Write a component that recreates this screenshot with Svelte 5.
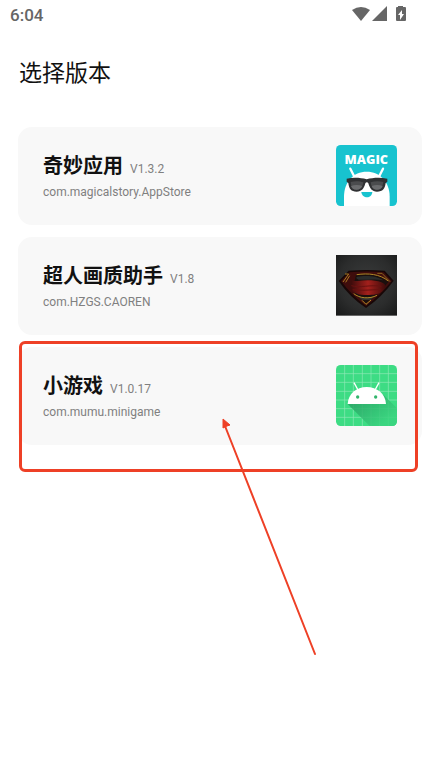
<script>
	const apps = [
		{ name: '奇妙应用', version: 'V1.3.2', pkg: 'com.magicalstory.AppStore', icon: 'magic' },
		{ name: '超人画质助手', version: 'V1.8', pkg: 'com.HZGS.CAOREN', icon: 'hero' },
		{ name: '小游戏', version: 'V1.0.17', pkg: 'com.mumu.minigame', icon: 'android', marked: true }
	];

	const gridLines = [26, 52, 79, 105, 131, 157];
</script>

{#snippet magicIcon()}
	<svg class="icon" viewBox="0 0 183 183" aria-hidden="true">
		<rect width="183" height="183" rx="14" fill="#18c3cf" />
		<text class="magic-text" x="91" y="56" text-anchor="middle">MAGIC</text>
		<path d="M24 183v-28C24 111 52 80 92 80s69 31 69 75v28z" fill="#fff" />
		<path d="M43 71l11 22M141 71l-11 22" stroke="#fff" stroke-width="7" stroke-linecap="round" />
		<path d="M76 141h33c-1 10-8 16-16 16s-16-6-17-16z" fill="#18c3cf" />
		<path d="M32 101c20-4 42-3 60 2 18-5 41-6 62-2v9l-5 4c-2 17-9 26-26 26-15 0-21-9-26-25-2-4-7-4-9 0-4 16-11 25-26 25-17 0-23-9-25-26l-5-4z" fill="#303133" />
		<path d="M44 111c13-4 28-3 38 1-2 15-9 22-20 22-12 0-17-8-18-23zM104 112c11-4 25-5 38-1-2 15-6 23-19 23-11 0-17-7-19-22z" fill="#4b4c4e" />
		<path d="M45 123c12-4 24-3 34 0-4 8-9 11-17 11-10 0-15-4-17-11zM107 123c12-4 23-3 33 0-3 8-8 11-17 11-8 0-13-3-16-11z" fill="#6b6c6e" />
	</svg>
{/snippet}

{#snippet heroIcon()}
	<svg class="icon" viewBox="0 0 183 183" aria-hidden="true">
		<defs>
			<radialGradient id="hero-bg" cx="50%" cy="45%" r="75%">
				<stop offset="0" stop-color="#3a3c3c" />
				<stop offset="0.6" stop-color="#2b2c2c" />
				<stop offset="1" stop-color="#171818" />
			</radialGradient>
			<linearGradient id="hero-red" x1="0" y1="0" x2="1" y2="0">
				<stop offset="0" stop-color="#3c0b0b" />
				<stop offset="0.5" stop-color="#a3201c" />
				<stop offset="1" stop-color="#3f0b0a" />
			</linearGradient>
		</defs>
		<rect width="183" height="183" fill="url(#hero-bg)" />
		<path d="M38 47q53-4 108 0l27 30q-36 50-83 82Q41 127 8 78z" fill="#170707" />
		<path d="M41 52q50-5 102 0l24 26q-34 43-77 75Q46 120 15 78z" fill="#3f0d0c" />
		<path d="M60 60c26-6 62-4 88 14 4 4 8 3 10 6q-31 38-68 65-22-17-41-38z" fill="#1b0f0d" />
		<path d="M48 68c-3 8 4 11 16 10 24-3 54-3 72 4 14 5 15 12 8 21-9 13-24 17-45 17-26 1-45-4-55-16l2-14q2-14 2-22z" fill="url(#hero-red)" />
		<path d="M46 92c26 8 56-4 90 2M50 104c26 4 50 0 84 0" fill="none" stroke="#691110" stroke-width="3" />
		<path d="M62 66c24-6 62-4 80 10-26-5-52 0-74-2-6-2-8-5-6-8z" fill="#2a2c2b" />
		<path d="M64 122c14 7 38 7 52 1l-12 12H78z" fill="#302f2b" />
		<path d="M21 81l17-24M38 57l-11 0M29 82l12-20" fill="none" stroke="#a77a22" stroke-width="3" />
		<path d="M62 59c34-5 70-2 95 19M53 116c18 14 47 17 70 5M78 136l12 12 15-13" fill="none" stroke="#b08a27" stroke-width="3" />
		<path d="M124 55l14 0 24 25" fill="none" stroke="#8b651f" stroke-width="3" />
		<path d="M0 182h183" stroke="#777" stroke-width="3" />
	</svg>
{/snippet}

{#snippet androidIcon()}
	<svg class="icon" viewBox="0 0 183 183" aria-hidden="true">
		<defs>
			<clipPath id="tile"><rect width="183" height="183" rx="14" /></clipPath>
			<linearGradient id="shade" gradientUnits="userSpaceOnUse" x1="60" y1="110" x2="125" y2="190">
				<stop offset="0" stop-color="#2ba566" />
				<stop offset="1" stop-color="#3ad47f" />
			</linearGradient>
		</defs>
		<g clip-path="url(#tile)">
			<rect width="183" height="183" fill="#3ddc84" />
			{#each gridLines as n}
				<path d="M{n} 0v183M0 {n}h183" stroke="#8feab8" stroke-width="2" />
			{/each}
			<path d="M35 117l66 66h82v-53l-43-43 10 30z" fill="url(#shade)" opacity="0.85" />
			<path d="M35 117c2-31 26-51 57-51s56 20 58 51z" fill="#fff" />
			<path d="M54 53l12 22M129 53l-12 22" stroke="#fff" stroke-width="4" />
			<circle cx="65" cy="96" r="5" fill="#32b56c" />
			<circle cx="119" cy="96" r="5" fill="#32b56c" />
		</g>
	</svg>
{/snippet}

<div class="screen">
	<div class="status">
		<span class="time">6:04</span>
		<svg class="signals" viewBox="0 0 56 18" aria-hidden="true">
			<path d="M0 4Q9-2 18 4L9 15z" />
			<path d="M35 0v15H20z" />
			<path d="M46 0h5v1h2q1 0 1 1v12q0 1-1 1h-8q-1 0-1-1V2q0-1 1-1h1z" />
			<path d="M50 4v4h2l-4 6V9h-2z" fill="#fff" />
		</svg>
	</div>

	<main>
		<h1>选择版本</h1>

		<ul>
			{#each apps as app}
				<li>
					<button type="button" class="card">
						<span class="info">
							<span class="heading">
								<span class="name">{app.name}</span>
								<span class="version">{app.version}</span>
							</span>
							<span class="pkg">{app.pkg}</span>
						</span>
						{#if app.icon === 'magic'}
							{@render magicIcon()}
						{:else if app.icon === 'hero'}
							{@render heroIcon()}
						{:else}
							{@render androidIcon()}
						{/if}
					</button>

					<!-- highlight drawn over the card to pick -->
					{#if app.marked}
						<div class="frame"></div>
						<svg class="arrow" viewBox="0 0 100 240" aria-hidden="true">
							<path d="M6 9l90 228" fill="none" stroke="#ee4026" stroke-width="2" stroke-linecap="round" />
							<path d="M4 2l7 6-3 1-4 2z" fill="#ee4026" stroke="#ee4026" stroke-linejoin="round" />
						</svg>
					{/if}
				</li>
			{/each}
		</ul>
	</main>
</div>

<style>
	:global(body) {
		margin: 0;
		background: #fff;
	}
	.screen {
		min-height: 100vh;
		font-family: Roboto, 'Noto Sans CJK SC', sans-serif;
		color: #111;
	}
	.status {
		display: flex;
		align-items: center;
		justify-content: space-between;
		height: 30px;
		padding: 0 32px 0 10px;
		color: #666;
	}
	.time {
		font-size: 17px;
		font-weight: 500;
	}
	.signals {
		width: 56px;
		height: 18px;
		fill: #666;
	}
	main {
		padding: 27px 18px;
	}
	h1 {
		margin: 0 0 36px;
		padding-left: 1px;
		font-size: 23px;
		font-weight: 400;
		line-height: 34px;
	}
	ul {
		display: flex;
		flex-direction: column;
		gap: 12px;
		margin: 0;
		padding: 0;
		list-style: none;
	}
	li {
		position: relative;
	}
	.card {
		display: flex;
		align-items: center;
		justify-content: space-between;
		box-sizing: border-box;
		width: 100%;
		min-height: 98px;
		padding: 18px 25px 19px;
		border: 0;
		border-radius: 14px;
		background: #f8f8f8;
		color: inherit;
		font-family: inherit;
		text-align: left;
		cursor: pointer;
	}
	.info {
		display: flex;
		flex-direction: column;
	}
	.heading {
		display: flex;
		align-items: baseline;
		gap: 7px;
		line-height: 30px;
	}
	.name {
		font-size: 20px;
		font-weight: 700;
	}
	.version,
	.pkg {
		color: #808080;
		font-size: 12px;
	}
	.pkg {
		line-height: 16px;
	}
	.icon {
		flex: none;
		width: 61px;
		height: 61px;
	}
	.magic-text {
		fill: #fff;
		font-family: 'Open Sans', sans-serif;
		font-size: 38px;
		font-weight: 800;
	}
	.frame {
		position: absolute;
		top: -6px;
		right: 4px;
		bottom: -27px;
		left: 1px;
		border: 3px solid #ee4026;
		border-radius: 6px;
		pointer-events: none;
	}
	.arrow {
		position: absolute;
		top: 70px;
		left: 201px;
		width: 100px;
		height: 240px;
		pointer-events: none;
	}
</style>
